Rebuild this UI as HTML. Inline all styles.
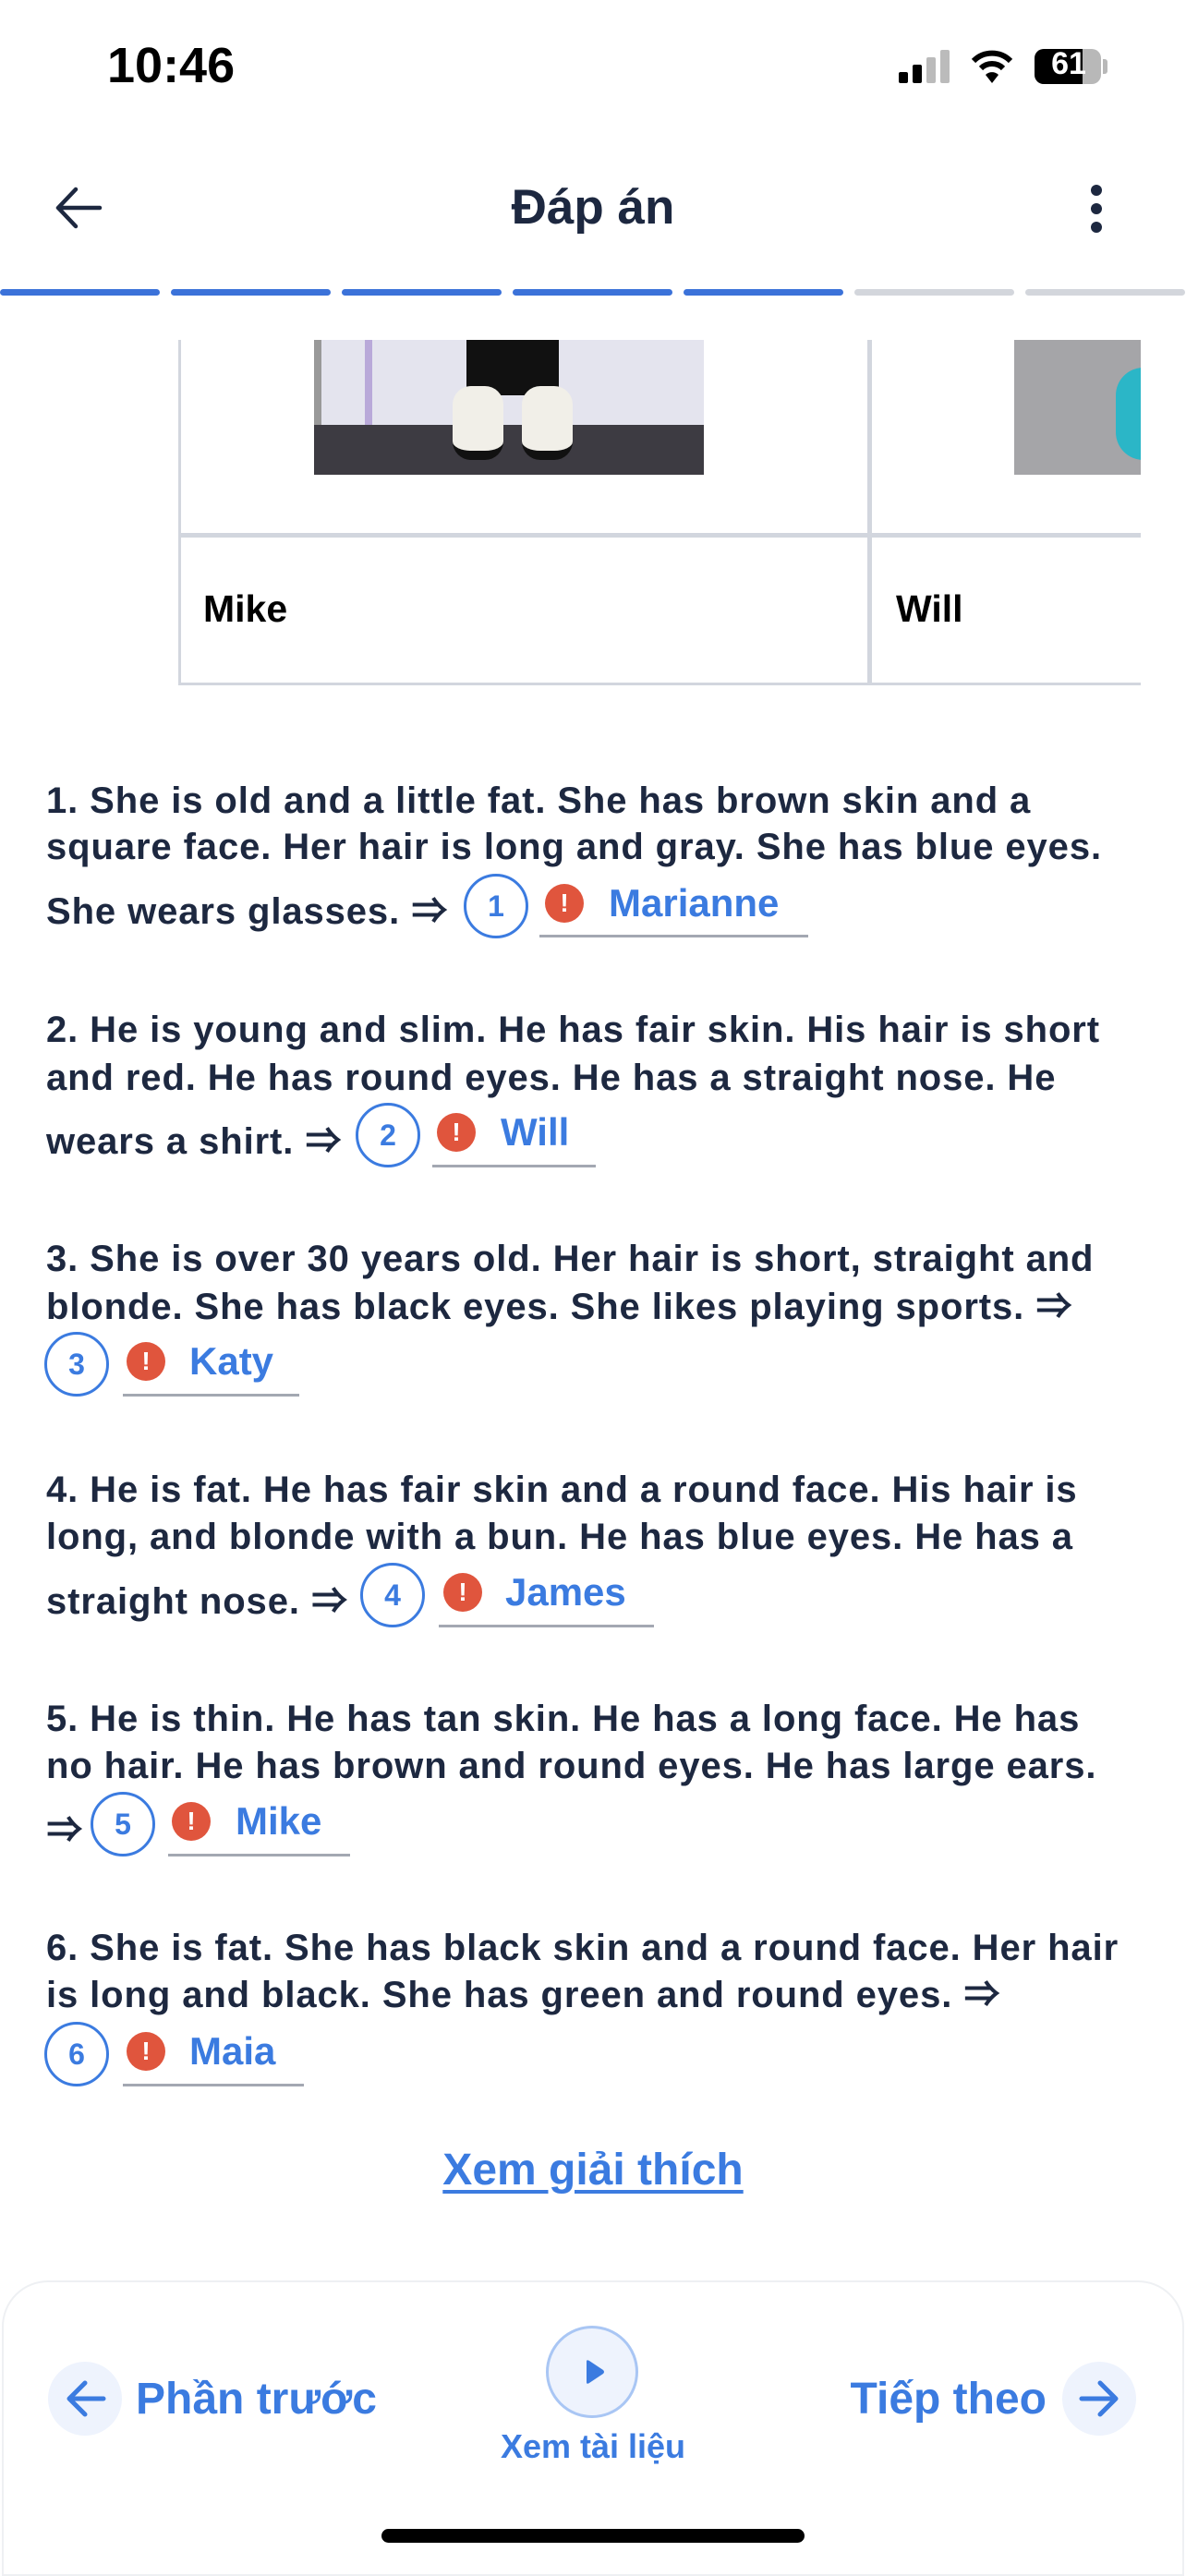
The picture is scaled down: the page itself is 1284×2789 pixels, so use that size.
<!DOCTYPE html>
<html><head><meta charset="utf-8"><style>
*{margin:0;padding:0;box-sizing:border-box}
body{width:1284px;height:2778px;background:#fff;position:relative;overflow:hidden;font-family:"Liberation Sans","Noto Sans CJK SC",sans-serif;color:#1d2840}
.a{position:absolute}
.t{position:absolute;left:50px;font-weight:bold;font-size:40px;letter-spacing:0.9px;white-space:nowrap;line-height:50px;transform:translateY(-20px)}
.c{position:absolute;width:70px;height:70px;border:3px solid #3b7be0;border-radius:50%;color:#3b7be0;font-weight:bold;font-size:32px;text-align:center;line-height:64px}
.r{position:absolute;width:42px;height:42px;border-radius:50%;background:#e0553d;color:#fff;font-weight:bold;font-size:28px;text-align:center;line-height:42px}
.n{position:absolute;color:#3b7be0;font-weight:bold;font-size:42px;line-height:50px}
.u{position:absolute;height:3px;background:#a3a8b2}
.seg{position:absolute;top:313px;height:7px;width:173px;border-radius:4px}
</style></head><body>
<div class="a" style="left:116px;top:40px;font-size:54px;font-weight:bold;color:#000">10:46</div>
<div class="a" style="left:973px;top:78px;width:10px;height:12px;background:#000;border-radius:2px"></div>
<div class="a" style="left:988px;top:70px;width:10px;height:20px;background:#000;border-radius:2px"></div>
<div class="a" style="left:1003px;top:62px;width:10px;height:28px;background:#bbb;border-radius:2px"></div>
<div class="a" style="left:1018px;top:54px;width:10px;height:36px;background:#bbb;border-radius:2px"></div>
<svg class="a" style="left:1050px;top:52px" width="48" height="40" viewBox="0 0 48 40"><path d="M4 14 A28 28 0 0 1 44 14" stroke="#000" stroke-width="6" fill="none"/><path d="M12 22 A17 17 0 0 1 36 22" stroke="#000" stroke-width="6" fill="none"/><path d="M24 38 L17 29 A10 10 0 0 1 31 29 Z" fill="#000"/></svg>
<div class="a" style="left:1120px;top:53px;width:72px;height:38px;background:#b8b8b8;border-radius:10px;overflow:hidden"><div style="width:52px;height:38px;background:#000"></div></div>
<div class="a" style="left:1122px;top:50px;width:70px;text-align:center;font-size:34px;font-weight:bold;color:#fff">61</div>
<div class="a" style="left:1194px;top:64px;width:5px;height:16px;background:#b8b8b8;border-radius:0 3px 3px 0"></div>

<svg class="a" style="left:58px;top:200px" width="54" height="50" viewBox="0 0 54 50"><path d="M50 25 H6 M24 5 L5 25 L24 45" stroke="#1d2840" stroke-width="4.5" fill="none" stroke-linecap="round" stroke-linejoin="round"/></svg>
<div class="a" style="left:0;width:1284px;top:194px;text-align:center;font-size:53px;font-weight:bold;color:#1d2840">Đáp án</div>
<div class="a" style="left:1181px;top:200px;width:12px;height:12px;border-radius:50%;background:#1d2840"></div>
<div class="a" style="left:1181px;top:220px;width:12px;height:12px;border-radius:50%;background:#1d2840"></div>
<div class="a" style="left:1181px;top:240px;width:12px;height:12px;border-radius:50%;background:#1d2840"></div>

<div class="seg" style="left:0;background:#3b72d9"></div>
<div class="seg" style="left:185px;background:#3b72d9"></div>
<div class="seg" style="left:370px;background:#3b72d9"></div>
<div class="seg" style="left:555px;background:#3b72d9"></div>
<div class="seg" style="left:740px;background:#3b72d9"></div>
<div class="seg" style="left:925px;background:#d3d6dc"></div>
<div class="seg" style="left:1110px;background:#d3d6dc"></div>

<!-- table -->
<div class="a" style="left:193px;top:368px;width:3px;height:374px;background:#d2d6de"></div>
<div class="a" style="left:939px;top:368px;width:5px;height:374px;background:#d2d6de"></div>
<div class="a" style="left:193px;top:577px;width:1042px;height:5px;background:#d2d6de"></div>
<div class="a" style="left:193px;top:739px;width:1042px;height:3px;background:#d2d6de"></div>
<div class="a" style="left:340px;top:368px;width:422px;height:146px;background:#e4e4ee;overflow:hidden">
 <div class="a" style="left:0;top:0;width:8px;height:146px;background:#999"></div>
 <div class="a" style="left:55px;top:0;width:8px;height:130px;background:#b9a9d9"></div>
 <div class="a" style="left:0;top:92px;width:422px;height:54px;background:#3d3b42"></div>
 <div class="a" style="left:165px;top:0;width:100px;height:60px;background:#111"></div>
 <div class="a" style="left:150px;top:50px;width:55px;height:80px;background:#f1efe8;border-radius:20px;border-bottom:10px solid #111"></div>
 <div class="a" style="left:225px;top:50px;width:55px;height:80px;background:#f1efe8;border-radius:20px;border-bottom:10px solid #111"></div>
</div>
<div class="a" style="left:1098px;top:368px;width:137px;height:146px;background:#a5a5a8;overflow:hidden"><div class="a" style="left:110px;top:30px;width:60px;height:100px;background:#2bb6c7;border-radius:30px"></div></div>
<div class="a" style="left:220px;top:636px;font-size:41px;font-weight:bold;color:#000">Mike</div>
<div class="a" style="left:970px;top:636px;font-size:41px;font-weight:bold;color:#000">Will</div>

<!-- item 1 -->
<div class="t" style="top:862px">1. She is old and a little fat. She has brown skin and a</div>
<div class="t" style="top:912px">square face. Her hair is long and gray. She has blue eyes.</div>
<div class="t" style="top:982px">She wears glasses. ⇒</div>
<div class="c" style="left:502px;top:946px">1</div><div class="r" style="left:590px;top:957px">!</div><div class="n" style="left:659px;top:953px">Marianne</div><div class="u" style="left:584px;top:1012px;width:291px"></div>
<!-- item 2 -->
<div class="t" style="top:1110px">2. He is young and slim. He has fair skin. His hair is short</div>
<div class="t" style="top:1162px">and red. He has round eyes. He has a straight nose. He</div>
<div class="t" style="top:1231px">wears a shirt. ⇒</div>
<div class="c" style="left:385px;top:1194px">2</div><div class="r" style="left:473px;top:1205px">!</div><div class="n" style="left:542px;top:1201px">Will</div><div class="u" style="left:468px;top:1261px;width:177px"></div>
<!-- item 3 -->
<div class="t" style="top:1358px">3. She is over 30 years old. Her hair is short, straight and</div>
<div class="t" style="top:1410px">blonde. She has black eyes. She likes playing sports. ⇒</div>
<div class="c" style="left:48px;top:1442px">3</div><div class="r" style="left:137px;top:1453px">!</div><div class="n" style="left:205px;top:1449px">Katy</div><div class="u" style="left:133px;top:1509px;width:191px"></div>
<!-- item 4 -->
<div class="t" style="top:1608px">4. He is fat. He has fair skin and a round face. His hair is</div>
<div class="t" style="top:1659px">long, and blonde with a bun. He has blue eyes. He has a</div>
<div class="t" style="top:1729px">straight nose. ⇒</div>
<div class="c" style="left:390px;top:1692px">4</div><div class="r" style="left:480px;top:1703px">!</div><div class="n" style="left:547px;top:1699px">James</div><div class="u" style="left:475px;top:1759px;width:233px"></div>
<!-- item 5 -->
<div class="t" style="top:1856px">5. He is thin. He has tan skin. He has a long face. He has</div>
<div class="t" style="top:1907px">no hair. He has brown and round eyes. He has large ears.</div>
<div class="t" style="top:1977px">⇒</div>
<div class="c" style="left:98px;top:1940px">5</div><div class="r" style="left:186px;top:1951px">!</div><div class="n" style="left:255px;top:1947px">Mike</div><div class="u" style="left:182px;top:2007px;width:197px"></div>
<!-- item 6 -->
<div class="t" style="top:2104px">6. She is fat. She has black skin and a round face. Her hair</div>
<div class="t" style="top:2155px">is long and black. She has green and round eyes. ⇒</div>
<div class="c" style="left:48px;top:2189px">6</div><div class="r" style="left:137px;top:2200px">!</div><div class="n" style="left:205px;top:2196px">Maia</div><div class="u" style="left:133px;top:2256px;width:196px"></div>

<div class="a" style="left:0;width:1284px;top:2322px;text-align:center;font-size:48px;font-weight:bold;color:#3b7be0;text-decoration:underline;text-decoration-thickness:4px;text-underline-offset:6px">Xem giải thích</div>

<!-- bottom bar -->
<div class="a" style="left:2px;top:2469px;width:1280px;height:320px;border:2px solid #eef0f3;border-radius:50px 50px 0 0;background:#fff"></div>
<div class="a" style="left:52px;top:2557px;width:80px;height:80px;border-radius:50%;background:#eef3fd"></div>
<svg class="a" style="left:68px;top:2572px" width="50" height="50" viewBox="0 0 50 50"><path d="M44 25 H8 M24 8 L7 25 L24 42" stroke="#3b7be0" stroke-width="5" fill="none" stroke-linecap="round" stroke-linejoin="round"/></svg>
<div class="a" style="left:147px;top:2570px;font-size:48px;font-weight:bold;color:#3b7be0">Phần trước</div>
<div class="a" style="left:591px;top:2518px;width:100px;height:100px;border-radius:50%;background:#eef3fd;border:3px solid #a9c6f4"></div>
<svg class="a" style="left:626px;top:2551px" width="34" height="34" viewBox="0 0 34 34"><path d="M9 6 Q9 3 12 5 L27 15 Q29 17 27 19 L12 29 Q9 31 9 28 Z" fill="#3b7be0"/></svg>
<div class="a" style="left:0;width:1284px;top:2628px;text-align:center;font-size:36px;font-weight:bold;color:#3b7be0">Xem tài liệu</div>
<div class="a" style="right:151px;top:2570px;font-size:48px;font-weight:bold;color:#3b7be0">Tiếp theo</div>
<div class="a" style="left:1150px;top:2557px;width:80px;height:80px;border-radius:50%;background:#eef3fd"></div>
<svg class="a" style="left:1165px;top:2572px" width="50" height="50" viewBox="0 0 50 50"><path d="M6 25 H42 M26 8 L43 25 L26 42" stroke="#3b7be0" stroke-width="5" fill="none" stroke-linecap="round" stroke-linejoin="round"/></svg>
<div class="a" style="left:413px;top:2738px;width:458px;height:15px;border-radius:8px;background:#000"></div>
</body></html>
